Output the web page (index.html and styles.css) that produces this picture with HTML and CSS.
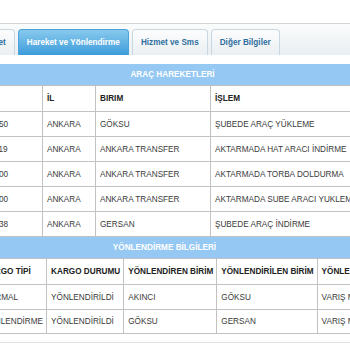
FILE: index.html
```html
<!DOCTYPE html>
<html lang="tr">
<head>
  <meta charset="UTF-8">
  <title>Gönderi Detayı</title>
  <link rel="stylesheet" href="styles.css">
</head>
<body>

  <!-- Sekmeler -->
  <div class="tabs">
    <ul class="tab-list">
      <li class="tab">Özet</li>
      <li class="tab active">Hareket ve Yönlendirme</li>
      <li class="tab">Hizmet ve Sms</li>
      <li class="tab">Diğer Bilgiler</li>
    </ul>
  </div>

  <div class="panel">
    <!-- Araç hareketleri -->
    <div class="bar bar-moves">ARAÇ HAREKETLERİ</div>
    <table class="grid grid-moves">
      <colgroup>
        <col class="c-date">
        <col class="c-city">
        <col class="c-unit">
        <col class="c-op">
      </colgroup>
      <thead>
        <tr>
          <th>TARİH</th>
          <th>İL</th>
          <th>BIRIM</th>
          <th>İŞLEM</th>
        </tr>
      </thead>
      <tbody>
        <tr><td>21.03.2014 08:14:50</td><td>ANKARA</td><td>GÖKSU</td><td>ŞUBEDE ARAÇ YÜKLEME</td></tr>
        <tr><td>21.03.2014 11:42:19</td><td>ANKARA</td><td>ANKARA TRANSFER</td><td>AKTARMADA HAT ARACI İNDİRME</td></tr>
        <tr><td>21.03.2014 12:05:00</td><td>ANKARA</td><td>ANKARA TRANSFER</td><td>AKTARMADA TORBA DOLDURMA</td></tr>
        <tr><td>21.03.2014 13:30:00</td><td>ANKARA</td><td>ANKARA TRANSFER</td><td>AKTARMADA SUBE ARACI YUKLEME</td></tr>
        <tr><td>22.03.2014 07:51:38</td><td>ANKARA</td><td>GERSAN</td><td>ŞUBEDE ARAÇ İNDİRME</td></tr>
      </tbody>
    </table>

    <!-- Yönlendirme bilgileri -->
    <div class="bar bar-route">YÖNLENDİRME BİLGİLERİ</div>
    <table class="grid grid-route">
      <thead>
        <tr>
          <th>KARGO TİPİ</th>
          <th>KARGO DURUMU</th>
          <th>YÖNLENDİREN BİRİM</th>
          <th>YÖNLENDİRİLEN BİRİM</th>
          <th>YÖNLENDİRME NEDENİ</th>
        </tr>
      </thead>
      <tbody>
        <tr><td>NORMAL</td><td>YÖNLENDİRİLDİ</td><td>AKINCI</td><td>GÖKSU</td><td>VARIŞ MERKEZİ DEĞİŞİKLİĞİ</td></tr>
        <tr><td>YÖNLENDİRME</td><td>YÖNLENDİRİLDİ</td><td>GÖKSU</td><td>GERSAN</td><td>VARIŞ MERKEZİ DEĞİŞİKLİĞİ</td></tr>
      </tbody>
    </table>

    <div class="panel-foot"></div>
  </div>

</body>
</html>
```

FILE: styles.css
```css
/* Genel */
body {
  margin: 0;
  font-family: "Liberation Sans", Arial, sans-serif;
  font-size: 8.2px;
  color: #3a3a3a;
  background: #fff;
  overflow: hidden;
}

/* Sekme çubuğu */
.tabs {
  margin-top: 23px;
  height: 31px;
  border-top: 1px solid #cfd4d8;
  background: linear-gradient(#fbfcfc, #e8eef2);
  display: flex;
  align-items: flex-end;
}

.tab-list {
  list-style: none;
  margin: 0 0 0 -21px;
  padding: 0;
  display: flex;
  gap: 3px;
}

.tab {
  box-sizing: border-box;
  height: 26px;
  line-height: 25px;
  padding: 0 8px;
  border: 1px solid #c9d7e1;
  border-bottom: none;
  border-radius: 4px 4px 0 0;
  background: linear-gradient(#fdfdfd, #e9eff3);
  color: #2f6e9e;
  font-weight: bold;
  white-space: nowrap;
}

.tab.active {
  background: linear-gradient(#88caee, #3d9bda);
  border-color: #4ca2da;
  color: #fff;
}

/* İçerik */
.panel {
  padding-top: 9px;
}

.bar {
  height: 21px;
  line-height: 21px;
  background: #95c8f3;
  color: #fff;
  font-weight: bold;
  text-align: center;
}

.bar-moves {
  padding-right: 5px;
}

.bar-route {
  padding-right: 21px;
}

/* Tablolar */
.grid {
  border-collapse: collapse;
}

.grid th,
.grid td {
  border: 1px solid #c2c2c2;
  padding: 0 3px 0 4px;
  text-align: left;
  white-space: nowrap;
}

.grid th {
  font-weight: bold;
  color: #222;
}

.grid thead tr {
  height: 26px;
}

.grid tbody tr {
  height: 25px;
}

.grid-moves {
  margin-left: -72px;
  width: 486px;
  table-layout: fixed;
}

.c-date { width: 114px; }
.c-city { width: 53px; }
.c-unit { width: 115px; }
.c-op { width: 204px; }

.grid-route {
  margin-left: -22px;
}

.grid-route tbody tr:last-child {
  height: 24px;
}

.panel-foot {
  margin-top: 8px;
  border-top: 1px solid #e2e2e2;
}
```
